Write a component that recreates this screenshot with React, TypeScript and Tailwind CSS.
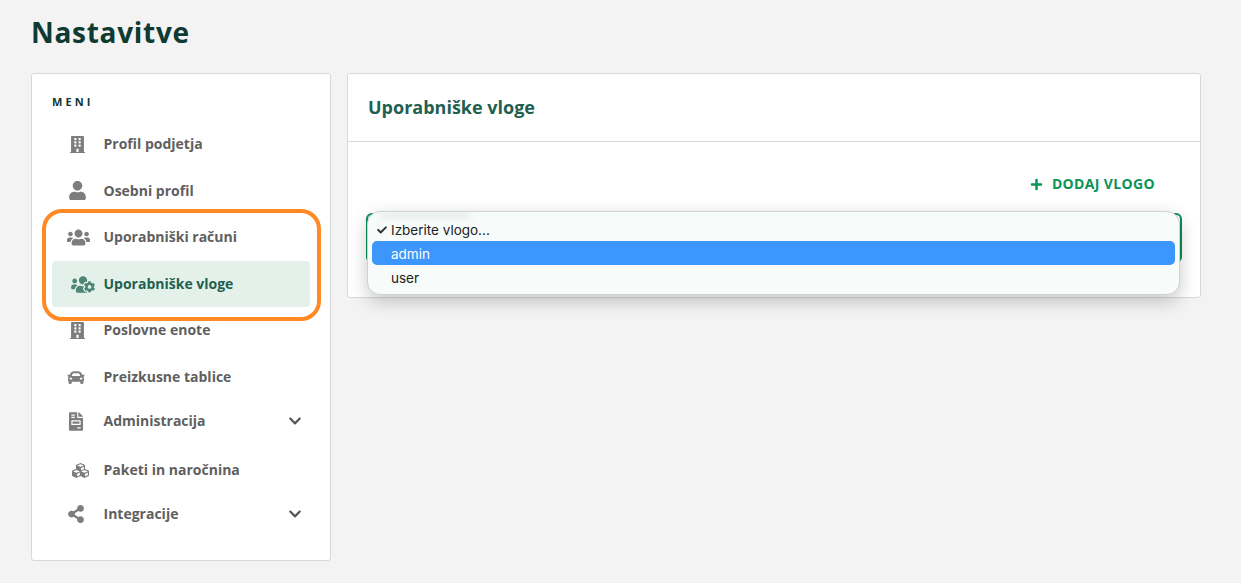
import type { IconType } from 'react-icons'
import {
	FaBuilding,
	FaCar,
	FaCheck,
	FaChevronDown,
	FaCubes,
	FaFileInvoice,
	FaPlus,
	FaShareAlt,
	FaUser,
	FaUsers,
	FaUsersCog
} from 'react-icons/fa'

type MenuItem = {
	title: string
	icon: IconType
	iconClass: string
	rowClass: string
	active?: boolean
	chevron?: boolean
}

const menu: MenuItem[] = [
	{ title: 'Profil podjetja', icon: FaBuilding, iconClass: 'w-[15px] h-[19px] ml-[18px]', rowClass: 'h-[46px]' },
	{ title: 'Osebni profil', icon: FaUser, iconClass: 'w-[17px] h-[19px] ml-[17px]', rowClass: 'h-[47px]' },
	{ title: 'Uporabniški računi', icon: FaUsers, iconClass: 'w-[23px] h-[19px] ml-[15px]', rowClass: 'h-[46px] mb-px' },
	{ title: 'Uporabniške vloge', icon: FaUsersCog, iconClass: 'w-[24px] h-[19px] ml-[19px]', rowClass: 'h-[46px]', active: true },
	{ title: 'Poslovne enote', icon: FaBuilding, iconClass: 'w-[15px] h-[19px] ml-[18px]', rowClass: 'h-[46px] mb-px' },
	{ title: 'Preizkusne tablice', icon: FaCar, iconClass: 'w-[18px] h-[17px] ml-[15px]', rowClass: 'h-[46px]' },
	{ title: 'Administracija', icon: FaFileInvoice, iconClass: 'w-[14px] h-[19px] ml-[17px]', rowClass: 'h-[42px] mb-px', chevron: true },
	{ title: 'Paketi in naročnina', icon: FaCubes, iconClass: 'w-[19px] h-[17px] ml-[19px]', rowClass: 'h-[54px]' },
	{ title: 'Integracije', icon: FaShareAlt, iconClass: 'w-[16px] h-[18px] ml-[16px]', rowClass: 'h-[34px]', chevron: true }
]

function Sidebar() {
	return (
		<aside className="relative h-[488px] w-[300px] shrink-0 rounded-[3px] border border-[#d8d8d8] bg-white pl-5 pr-5">
			<div className="pt-[20px] text-[11px] leading-[15px] font-bold tracking-[3.1px] text-[#0f3a32]">MENI</div>
			<nav className="mt-[12px] flex flex-col">
				{menu.map((item) => (
					<div
						key={item.title}
						className={`flex items-center rounded-[4px] ${item.rowClass} ${item.active ? 'bg-[#e3f1ea] text-[#1f5f50]' : 'text-[#5f5f5f]'}`}
					>
						<div className="flex w-[51.5px] shrink-0 items-center">
							<item.icon className={`${item.iconClass} ${item.active ? 'text-[#4f8576]' : 'text-[#7d7d7d]'}`} />
						</div>
						<span className="mb-px flex-1 text-[14px] font-bold">{item.title}</span>
						{item.chevron && <FaChevronDown className="mr-[7px] h-[14px] w-[16px] text-[#555555]" />}
					</div>
				))}
			</nav>
			{/* oznaka na posnetku */}
			<div className="absolute top-[135px] left-[10px] h-[112px] w-[279px] rounded-[20px] border-[4px] border-[#ff8a25]" />
		</aside>
	)
}

function RolePanel() {
	return (
		<section className="relative h-[225px] w-[854px] rounded-[3px] border border-[#d8d8d8] bg-white">
			<header className="flex h-[68px] items-center border-b border-[#d8d8d8] px-5">
				<h2 className="text-[18px] font-bold text-[#1f5f50]">Uporabniške vloge</h2>
			</header>
			<div className="px-[18px]">
				<div className="flex justify-end pt-[32px] pr-[27px]">
					<button className="flex items-center gap-[9px] text-[14px] leading-[20px] font-bold tracking-[0.35px] text-[#0a9358]">
						<FaPlus className="h-[13px] w-[13px]" />
						DODAJ VLOGO
					</button>
				</div>
				<div className="mt-[19px] h-[50px] rounded-[6px] border-2 border-[#0a8f57] bg-white" />
			</div>
			{/* odprt sistemski meni */}
			<div className="absolute top-[137px] left-[19px] h-[84px] w-[813px] overflow-hidden rounded-[13px] border border-[#cfd2d1] bg-[#f7fbfa] px-[4px] pt-[5px] font-['Inter',sans-serif] text-[13.5px] text-[#222222] shadow-[0_6px_18px_rgba(0,0,0,0.22)]">
				<div className="absolute top-[1px] left-[12px] h-[5px] w-[90px] bg-[#e6e9e8] blur-[3px]" />
				<div className="relative flex h-[24px] items-center pt-[2px] pl-[5px]">
					<FaCheck className="h-[10px] w-[10px] text-[#333333]" />
					<span className="ml-[4px]">Izberite vlogo...</span>
				</div>
				<div className="relative flex h-[24px] items-center rounded-[5px] bg-[#3d96fb] pt-[2px] pl-[19px] text-white">admin</div>
				<div className="relative flex h-[24px] items-center pt-[2px] pl-[19px]">user</div>
			</div>
		</section>
	)
}

export default function App() {
	return (
		<div className="h-[583px] w-[1241px] overflow-hidden bg-[#f3f3f3] pl-[31px] font-['Open_Sans',sans-serif]">
			<h1 className="pt-[13px] text-[28px] leading-[38px] font-bold tracking-[0.7px] text-[#0f3a32]">Nastavitve</h1>
			<div className="mt-[22px] flex gap-4">
				<Sidebar />
				<RolePanel />
			</div>
		</div>
	)
}
